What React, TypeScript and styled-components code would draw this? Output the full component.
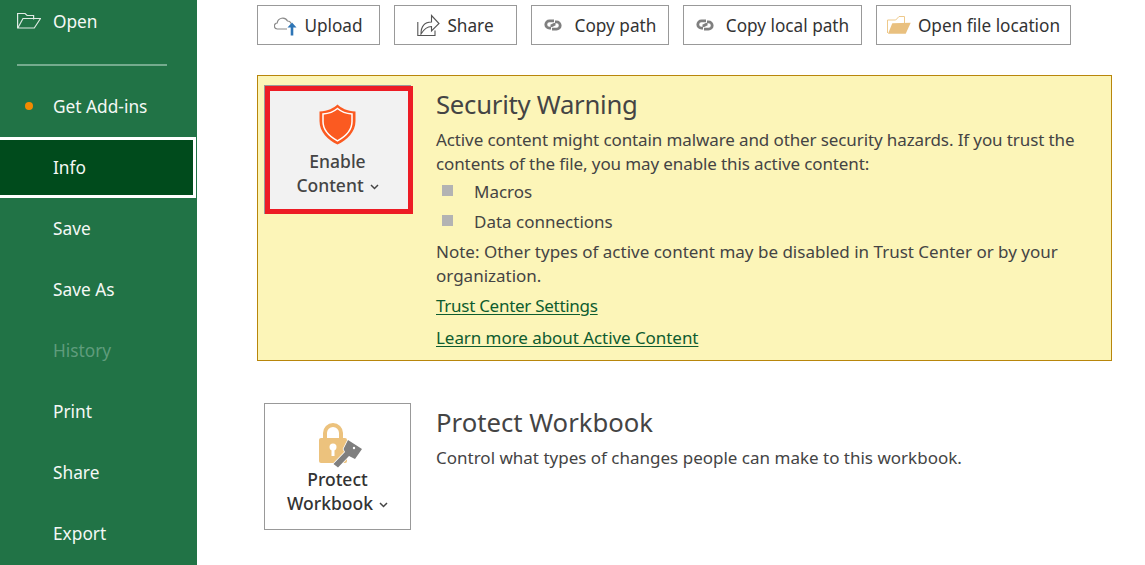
import styled, { createGlobalStyle } from "styled-components";

const GlobalStyle = createGlobalStyle`
    html, body {
        margin: 0;
        padding: 0;
        background: #fff;
        overflow: hidden;
    }
    body {
        font-family: "Noto Sans", "Open Sans", "Liberation Sans", sans-serif;
    }
`;

const Page = styled.div`
    display: flex;
    width: 1145px;
    height: 565px;
    overflow: hidden;
`;

const Sidebar = styled.nav`
    flex: 0 0 197px;
    background: #217346;
    color: #fff;
    margin-top: -9px;
`;

const NavItem = styled.div<{ $active?: boolean; $disabled?: boolean }>`
    height: 61px;
    box-sizing: border-box;
    display: flex;
    align-items: center;
    padding-left: 53px;
    font-size: 17.3px;
    position: relative;
    color: ${(p) => (p.$disabled ? "#5f9c7c" : "#f4f8f5")};
    ${(p) =>
        p.$active &&
        `
        background: #004b1c;
        border: 3px solid #fff;
        border-left: 0;
        width: 196px;
    `}
`;

const NavIcon = styled.svg`
    position: absolute;
    left: 17px;
    top: 21px;
`;

const NavDivider = styled.div`
    height: 2px;
    width: 150px;
    margin: 12px 0 10px 17px;
    background: #75ab8e;
`;

const Dot = styled.span`
    position: absolute;
    left: 24.5px;
    top: 26px;
    width: 8px;
    height: 8px;
    border-radius: 50%;
    background: #f28a00;
`;

const Main = styled.main`
    flex: 1;
    padding: 5px 33px 0 60px;
    color: #444;
`;

const Toolbar = styled.div`
    display: flex;
    gap: 14px;
    margin-bottom: 30px;
`;

const ToolButton = styled.div<{ $w: number; $gap?: number }>`
    width: ${(p) => p.$w}px;
    height: 40px;
    box-sizing: border-box;
    border: 1px solid #999;
    display: flex;
    align-items: center;
    justify-content: center;
    gap: ${(p) => p.$gap ?? 7}px;
    font-size: 17.2px;
    color: #333;
    background: #fff;
`;

const WarningPanel = styled.section`
    display: flex;
    box-sizing: border-box;
    height: 286px;
    width: 855px;
    padding: 9px 6px 0 6px;
    background: #fcf5b8;
    border: 1px solid #b8860b;
`;

const BigButton = styled.div<{ $warn?: boolean }>`
    position: relative;
    flex: 0 0 147px;
    height: ${(p) => (p.$warn ? "129px" : "127px")};
    box-sizing: border-box;
    border: 1px solid #999;
    background: ${(p) => (p.$warn ? "#f2f2f2" : "#fff")};
    color: ${(p) => (p.$warn ? "#444" : "#333")};
    display: flex;
    flex-direction: column;
    align-items: center;
    font-size: 17.5px;
    font-weight: 500;
    line-height: 24px;
    text-align: center;
    padding-top: 18px;
`;

const BigLabel = styled.div<{ $top: number }>`
    margin-top: ${(p) => p.$top}px;
`;

const RedMark = styled.div`
    position: absolute;
    left: 0;
    top: 0;
    width: 148px;
    height: 128px;
    box-sizing: border-box;
    border: 5px solid #ed1c24;
`;

const Chevron = styled.svg`
    margin-left: 6px;
    vertical-align: 2px;
`;

const Body = styled.div<{ $top: number }>`
    flex: 1;
    margin-left: 25px;
    padding-top: ${(p) => p.$top}px;
    font-size: 17px;
`;

const Heading = styled.h2<{ $tight?: boolean }>`
    margin: 0 0 6px;
    font-size: 25.7px;
    font-weight: 400;
    line-height: 34px;
    color: #444;
    letter-spacing: ${(p) => (p.$tight ? "-0.25px" : "normal")};
`;

const Para = styled.p<{ $tight?: boolean; $top?: number }>`
    margin: ${(p) => p.$top ?? 0}px 0 0;
    line-height: 24px;
    color: #444;
    letter-spacing: ${(p) => (p.$tight ? "-0.11px" : "normal")};
`;

const Bullet = styled.div`
    display: flex;
    align-items: center;
    height: 30px;
    padding-left: 6px;
    color: #444;

    &::before {
        content: "";
        width: 11px;
        height: 11px;
        margin-right: 21px;
        background: #b3b3b3;
        position: relative;
        top: -1px;
    }
`;

const BodyLink = styled.a<{ $gap: number; $spacing: number }>`
    display: block;
    width: fit-content;
    margin-top: ${(p) => p.$gap}px;
    line-height: 24px;
    color: #0e5c2f;
    letter-spacing: ${(p) => p.$spacing}px;
    text-decoration: underline;
    text-underline-offset: 2px;
`;

const ProtectRow = styled.section`
    display: flex;
    padding: 42px 0 0 7px;
`;

const LockSvg = styled.svg`
    margin-left: 6px;
`;

function FolderOutline() {
    return (
        <NavIcon width="24" height="17" viewBox="0 0 24 17" fill="none" stroke="#dfeae4" strokeWidth="1.2">
            <path d="M.6 16V1.500h7.500l2 2h6.500v4" />
            <path d="M.8 16h16.500L23.500 6.500H6z" />
        </NavIcon>
    );
}

function CloudUp() {
    return (
        <svg width="23" height="21" viewBox="0 0 23 21" fill="none">
            <path
                d="M13 14H3.500a3 3 0 0 1-.3-6 5.500 5.500 0 0 1 10.300-2 3.500 3.500 0 0 1 3.500 2.500"
                stroke="#8a8a8a"
                strokeWidth="1.200"
            />
            <path d="M18 7.500l4.500 5h-3.200V20.500h-2.600V12.500h-3.200z" fill="#2e75b6" />
        </svg>
    );
}

function ShareIcon() {
    return (
        <svg width="23" height="23" viewBox="0 0 23 23" fill="none" stroke="#555" strokeWidth="1.100">
            <path d="M.8 8v13.500H18v-5" />
            <path d="M4 20C4 12 8 8 14.500 8V1.500L22 9.500 14.500 17v-4.500C10 12.500 7 15 4 20z" />
        </svg>
    );
}

function LinkIcon() {
    return (
        <svg width="18" height="12" viewBox="0 0 18 12" fill="none" stroke="#7f7f7f" strokeWidth="2.800">
            <path d="M10 1.800H5.500a3.700 3.700 0 0 0 0 7.400H7" />
            <path d="M8 10.200h4.500a3.700 3.700 0 0 0 0-7.400H11" />
            <path d="M6.500 6.800C9 6.800 9 5.200 11.500 5.200" />
        </svg>
    );
}

function FolderFilled() {
    return (
        <svg width="24" height="18" viewBox="0 0 24 18">
            <path d="M.5 17V4h8.200L12 .5h5.500V7" fill="#fff" stroke="#eec98a" strokeWidth="1" />
            <path d="M1 17.800 5.300 7.300 23.700 6.700 18.700 17.800z" fill="#e9c07f" />
        </svg>
    );
}

function ShieldIcon() {
    return (
        <svg width="37" height="41" viewBox="0 0 37 41">
            <path
                d="M18.500.5C22 4 28 7 36.500 7.500V17c0 11-8.500 19-18 23.500C9 36 .5 28 .5 17V7.500C9 7 15 4 18.500.5z"
                fill="#fb5a21"
            />
            <path
                d="M18.500 4.500C22 7.500 27 9.500 33 10v7.500c0 8.500-6.500 15-14.500 19.300C10.500 32.500 4 26 4 17.500V10c6-.5 11-2.500 14.500-5.500z"
                fill="#fb5a21"
                stroke="#fff"
                strokeWidth="1.500"
            />
        </svg>
    );
}

function LockKeyIcon() {
    return (
        <LockSvg width="44" height="46" viewBox="0 0 44 46">
            <path d="M6 18v-7a8 8 0 0 1 16 0v7" fill="none" stroke="#ecc27d" strokeWidth="4" />
            <rect x="0" y="16" width="28" height="25" rx="2" fill="#ecc27d" />
            <circle cx="14" cy="25" r="3.500" fill="#fff" />
            <rect x="12.500" y="26" width="3" height="8" fill="#fff" />
            <path
                d="M29 18l14 9-7 10-6-3-11 11.500-4.500-3.500L26 30l-1.500-3z"
                fill="#7f7f7f"
                stroke="#fff"
                strokeWidth="1.500"
                paintOrder="stroke"
            />
            <circle cx="35" cy="26" r="1.200" fill="#fff" />
        </LockSvg>
    );
}

function Caret() {
    return (
        <Chevron width="9" height="6" viewBox="0 0 9 6" fill="none" stroke="#444" strokeWidth="1.500">
            <path d="M1 1l3.500 3.500L8 1" />
        </Chevron>
    );
}

function App() {
    return (
        <Page>
            <GlobalStyle />
            <Sidebar>
                <NavItem>
                    <FolderOutline />
                    Open
                </NavItem>
                <NavDivider />
                <NavItem>
                    <Dot />
                    Get Add-ins
                </NavItem>
                <NavItem $active>Info</NavItem>
                <NavItem>Save</NavItem>
                <NavItem>Save As</NavItem>
                <NavItem $disabled>History</NavItem>
                <NavItem>Print</NavItem>
                <NavItem>Share</NavItem>
                <NavItem>Export</NavItem>
            </Sidebar>
            <Main>
                <Toolbar>
                    <ToolButton $w={123}>
                        <CloudUp />
                        Upload
                    </ToolButton>
                    <ToolButton $w={123}>
                        <ShareIcon />
                        Share
                    </ToolButton>
                    <ToolButton $w={138} $gap={13}>
                        <LinkIcon />
                        Copy path
                    </ToolButton>
                    <ToolButton $w={179} $gap={12}>
                        <LinkIcon />
                        Copy local path
                    </ToolButton>
                    <ToolButton $w={195}>
                        <FolderFilled />
                        Open file location
                    </ToolButton>
                </Toolbar>
                <WarningPanel>
                    <BigButton $warn>
                        <ShieldIcon />
                        <BigLabel $top={4}>
                            Enable
                            <br />
                            Content
                            <Caret />
                        </BigLabel>
                        <RedMark />
                    </BigButton>
                    <Body $top={3}>
                        <Heading $tight>Security Warning</Heading>
                        <Para $tight>
                            Active content might contain malware and other security hazards. If you trust the
                            contents of the file, you may enable this active content:
                        </Para>
                        <Bullet>Macros</Bullet>
                        <Bullet>Data connections</Bullet>
                        <Para $top={4}>
                            Note: Other types of active content may be disabled in Trust Center or by your
                            organization.
                        </Para>
                        <BodyLink $gap={6} $spacing={-0.28}>
                            Trust Center Settings
                        </BodyLink>
                        <BodyLink $gap={8} $spacing={-0.06}>
                            Learn more about Active Content
                        </BodyLink>
                    </Body>
                </WarningPanel>
                <ProtectRow>
                    <BigButton>
                        <LockKeyIcon />
                        <BigLabel $top={-1}>
                            Protect
                            <br />
                            Workbook
                            <Caret />
                        </BigLabel>
                    </BigButton>
                    <Body $top={3}>
                        <Heading>Protect Workbook</Heading>
                        <Para>Control what types of changes people can make to this workbook.</Para>
                    </Body>
                </ProtectRow>
            </Main>
        </Page>
    );
}

export default App;
